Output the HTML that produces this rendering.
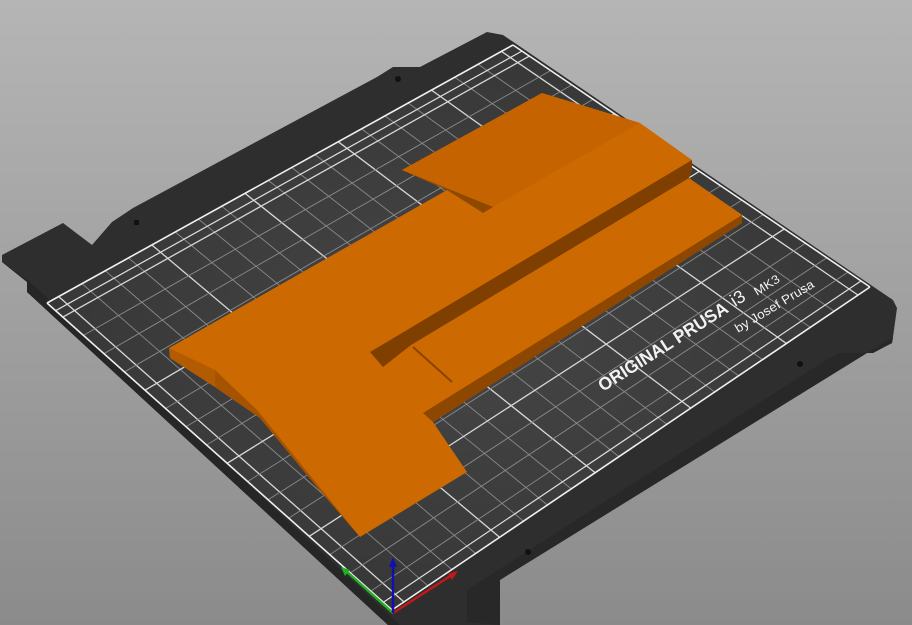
<!DOCTYPE html>
<html><head><meta charset="utf-8"><style>
html,body{margin:0;padding:0;width:912px;height:625px;overflow:hidden;background:linear-gradient(#b5b5b5,#8b8b8b);}
svg{display:block}
</style></head><body>
<svg id="s" width="912" height="625" viewBox="0 0 912 625" xmlns="http://www.w3.org/2000/svg">
<defs>
<radialGradient id="pg" cx="0.5" cy="0.5" r="0.6"><stop offset="0" stop-color="#464646"/><stop offset="1" stop-color="#343434"/></radialGradient>
</defs>
<polygon points="487,32 503,35 893,300 897,308 893,337 892,343 873,353 837,353 500,580 500,625 388,625 27,292 27,282 2,262 2,255 63,223 92,245 112,222 133,208 377,77 393,67 420,67" fill="#2e2e2e"/>
<polygon points="2,262 27,282 27,292 388,625 400,625 30,282" fill="#262626"/>
<polygon points="837,353 873,353 892,343 893,337 500,580 500,625 467,622 467,590" fill="#282828"/>
<polygon points="513,45 870,287 392,610 47,303" fill="url(#pg)"/>
<g id="grid"></g>
<circle cx="800" cy="364" r="3" fill="#111"/><circle cx="528" cy="552" r="3" fill="#111"/>
<rect x="134" y="220" width="5" height="5" fill="#111"/><circle cx="398" cy="79" r="3" fill="#111"/>
<g fill="#f2f2f2" font-family="Liberation Sans, sans-serif">
<text transform="translate(603,392) rotate(-32.5)" font-size="18" font-weight="bold" textLength="150" lengthAdjust="spacingAndGlyphs">ORIGINAL PRUSA</text>
<text transform="translate(735,307) rotate(-32.5)" font-size="18">i3</text>
<text transform="translate(757,296) rotate(-32)" font-size="12" textLength="28" lengthAdjust="spacingAndGlyphs">MK3</text>
<text transform="translate(738,333) rotate(-31)" font-size="12.5" textLength="90" lengthAdjust="spacingAndGlyphs">by Josef Prusa</text>
</g>
<!-- object -->
<polygon points="169,348 447,190 402,170 542,93 640,123 692,160 692,168 689,178 742,215 742,223 433,422 467,472 360,537 317,487 260,418 215,387 170,358" fill="#cc6900"/>
<polygon points="402,170 542,93 640,123 493,207" fill="#c46300"/>
<polygon points="402,170 447,190 483,213 493,207" fill="#8f4800"/>
<polygon points="370,352 692,160 692,170 689,178 411,345 383,367" fill="#7e3f00"/>
<polygon points="742,215 742,223 433,422 423,413" fill="#8e4700"/>
<polygon points="169,348 170,358 215,387 215,370" fill="#b35b00"/>
<polygon points="215,370 257,410 300,463 360,537 317,487 260,418 215,387" fill="#a55300"/>
<line x1="413" y1="347" x2="452" y2="382" stroke="#8a4400" stroke-width="2"/>
<!-- axes -->
<line x1="393" y1="613" x2="455" y2="573" stroke="#c41818" stroke-width="2.5"/>
<polygon points="458,571 448,574 452,580" fill="#c41818"/>
<line x1="393" y1="613" x2="345" y2="570" stroke="#22b022" stroke-width="2.5"/>
<polygon points="341,567 350,570 345,576" fill="#22b022"/>
<line x1="393" y1="613" x2="393" y2="563" stroke="#1010b0" stroke-width="2.5"/>
<polygon points="393,557 389,567 397,567" fill="#1010b0"/>
</svg>
<script>
(function(){
var B=[392,610],R=[870,287],L=[47,303],T=[513,45];
function P(u,v){return [B[0]+u*(R[0]-B[0])+v*(L[0]-B[0])+u*v*(T[0]-R[0]-L[0]+B[0]),
B[1]+u*(R[1]-B[1])+v*(L[1]-B[1])+u*v*(T[1]-R[1]-L[1]+B[1])];}
var g=document.getElementById('grid'),h='';
function ln(a,b,c,w){h+='<line x1="'+a[0].toFixed(1)+'" y1="'+a[1].toFixed(1)+'" x2="'+b[0].toFixed(1)+'" y2="'+b[1].toFixed(1)+'" stroke="'+c+'" stroke-width="'+w+'"/>';}
var k,u,v,maj;
for(k=0;k<=19;k++){u=0.025+0.05*k;maj=(k%4==0)||k==19;ln(P(u,0),P(u,1),maj?'#d8d8d8':'#8a8a8a',maj?1.3:0.9);}
for(k=-4;k<=13;k++){v=0.24+0.0595*k;if(v<=0.01||v>=0.99)continue;maj=(k%4==0);ln(P(0,v),P(1,v),maj?'#d8d8d8':'#8a8a8a',maj?1.3:0.9);}
ln(P(0,0.025),P(1,0.025),'#e0e0e0',1.2);ln(P(0,0.975),P(1,0.975),'#e0e0e0',1.2);
ln(P(0,0),P(1,0),'#f0f0f0',1.6);ln(P(0,1),P(1,1),'#f0f0f0',1.6);ln(P(0,0),P(0,1),'#f0f0f0',1.6);ln(P(1,0),P(1,1),'#f0f0f0',1.6);
g.innerHTML=h;
})();
</script>
</body></html>
